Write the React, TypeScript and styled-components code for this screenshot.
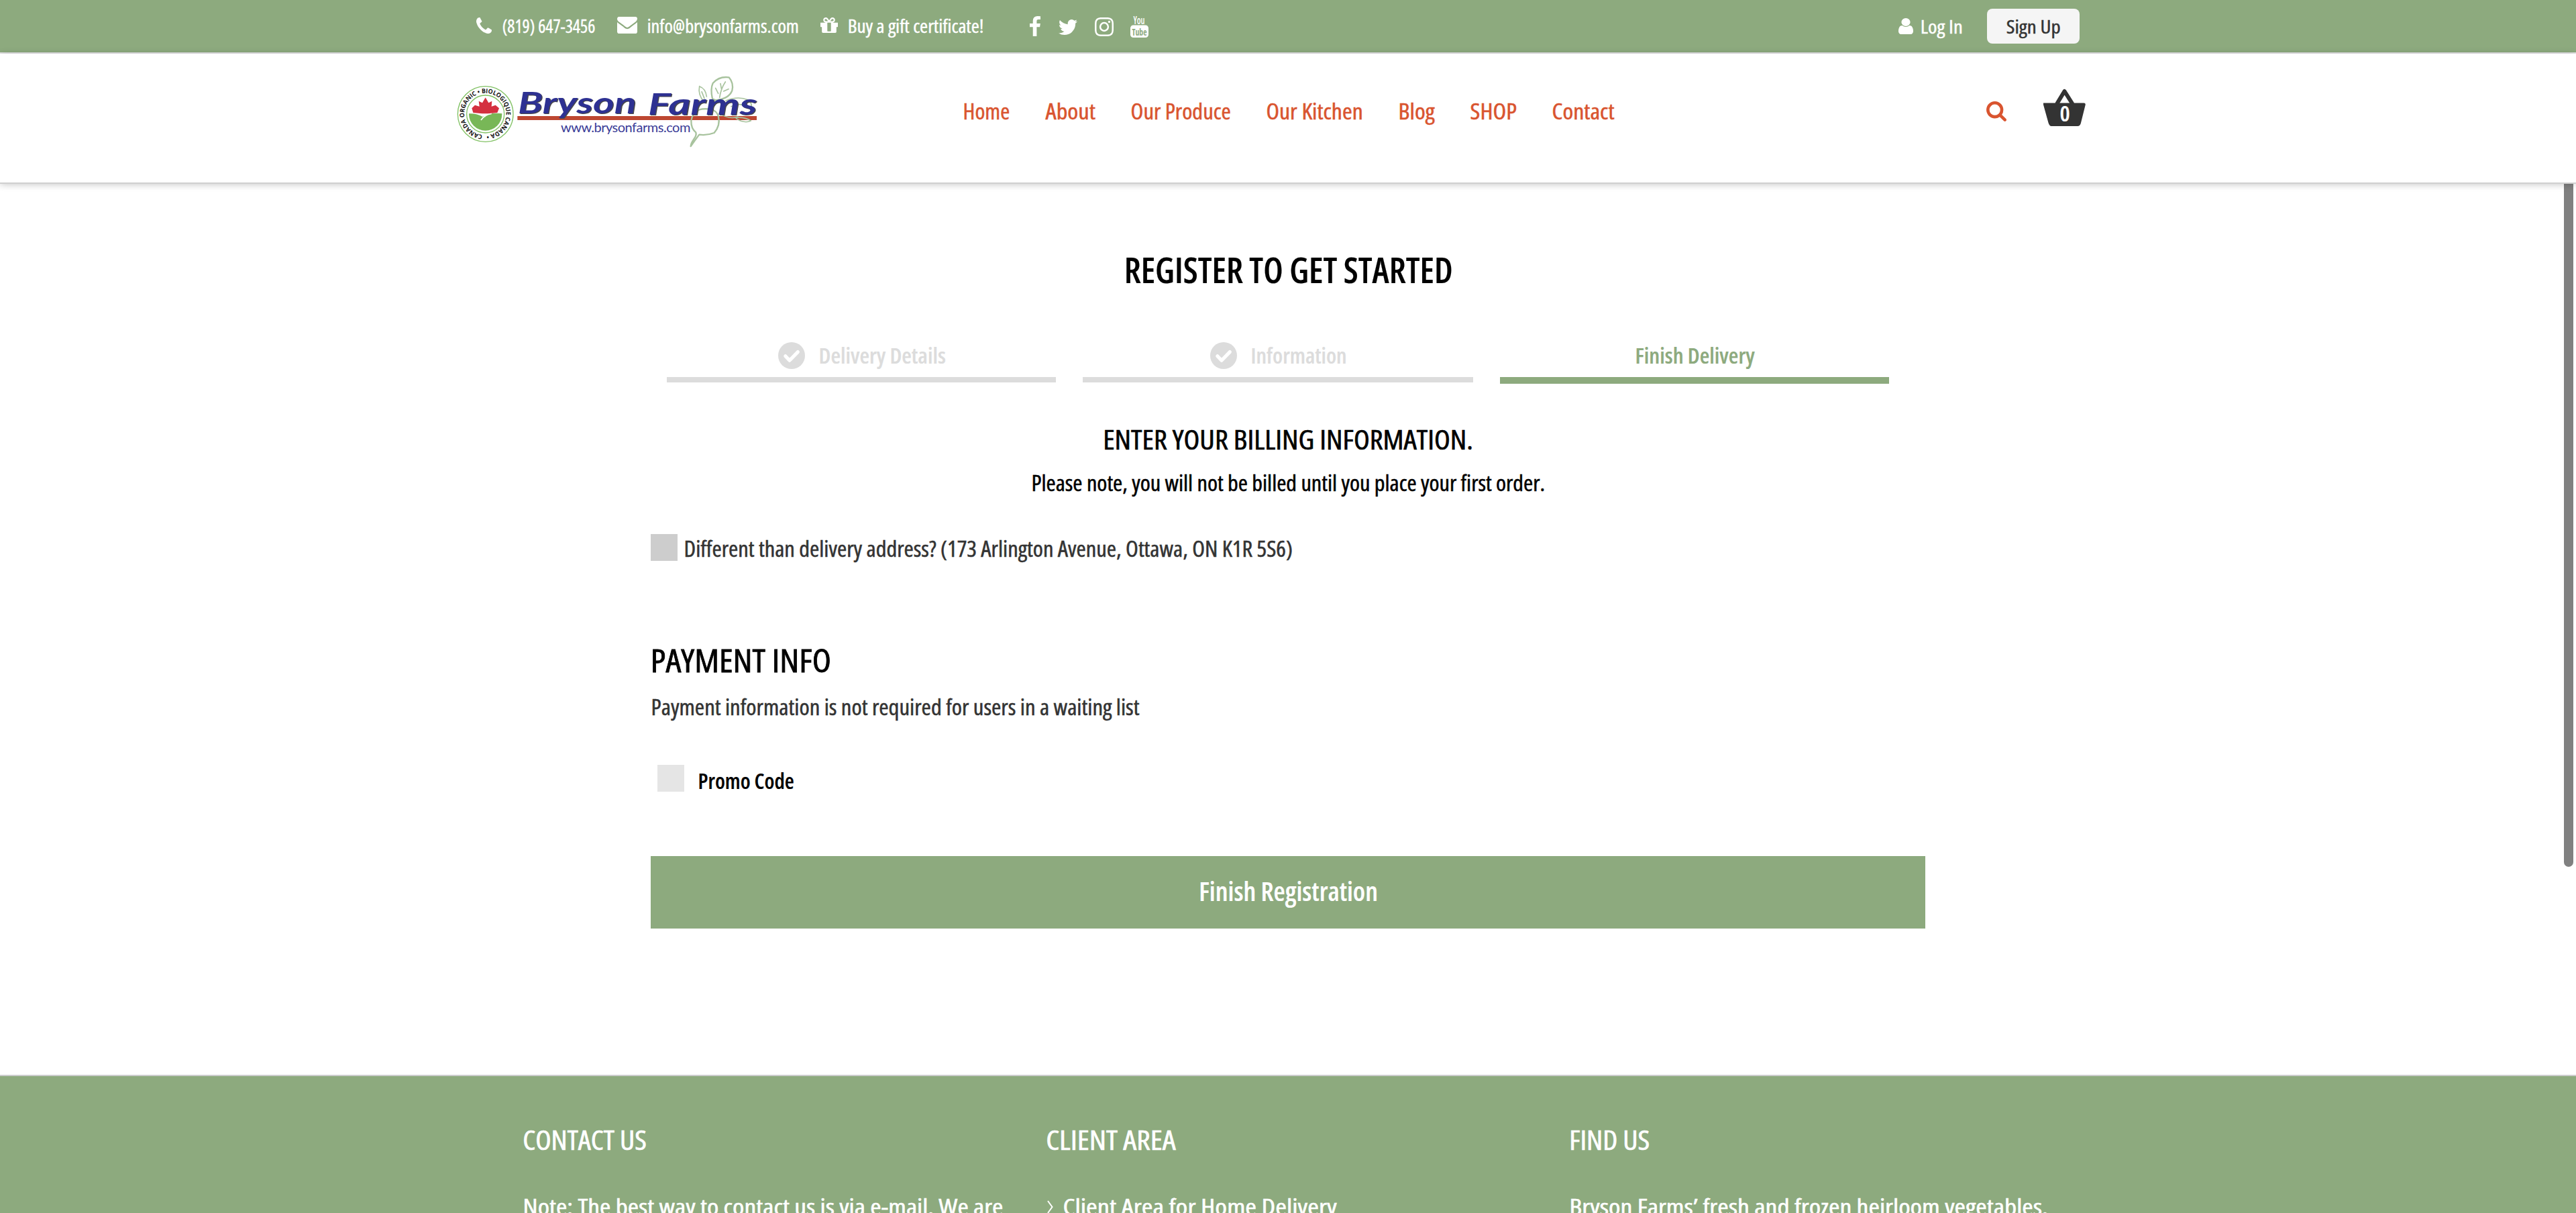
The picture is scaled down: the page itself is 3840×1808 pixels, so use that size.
import React, { useLayoutEffect, useRef, useState } from "react";
import styled, { createGlobalStyle, css } from "styled-components";

const GREEN = "#8daa7e";
const ORANGE = "#d9542f";

const Global = createGlobalStyle`
  * { box-sizing: border-box; }
  body { margin: 0; background: #fff; overflow: hidden; font-family: "Open Sans", "Noto Sans", sans-serif; font-stretch: 75%; }
  svg { display: block; flex: none; }
`;

/* A line of condensed text, squeezed or stretched to an exact width. */
const LineBox = styled.span<{ $w: number; $size: number; $line: number; $weight: number; $color: string }>`
  display: block;
  flex: none;
  width: ${(p) => p.$w}px;
  height: ${(p) => p.$line}px;
  line-height: ${(p) => p.$line}px;
  font-size: ${(p) => p.$size}px;
  font-weight: ${(p) => p.$weight};
  color: ${(p) => p.$color};
  -webkit-text-stroke: ${(p) => (p.$weight > 500 ? 0.2 : p.$size * 0.016)}px ${(p) => p.$color};
`;
const LineInk = styled.span`
  display: inline-block;
  white-space: nowrap;
  transform-origin: 0 50%;
`;

type LineProps = { w: number; size?: number; line?: number; weight?: number; color?: string; children: string };

function Line({ w, size = 32, line = 40, weight = 500, color = "#000", children }: LineProps) {
  const ref = useRef<HTMLSpanElement>(null);
  const [scale, setScale] = useState(1);
  const bearing = size * 0.045;
  useLayoutEffect(() => {
    if (ref.current) setScale((w + bearing * 2) / ref.current.offsetWidth);
  }, [w, bearing, children]);
  return (
    <LineBox $w={w} $size={size} $line={line} $weight={weight} $color={color}>
      <LineInk ref={ref} style={{ transform: `translateX(${-bearing}px) scaleX(${scale})` }}>
        {children}
      </LineInk>
    </LineBox>
  );
}

const Page = styled.div`
  position: relative;
  width: 3840px;
  height: 1808px;
  overflow: hidden;
  display: flex;
  flex-direction: column;
  background: #fff;
`;

const TopBar = styled.div`
  height: 80px;
  flex: none;
  display: flex;
  justify-content: space-between;
  padding: 0 740px 0 710px;
  background: ${GREEN};
  border-bottom: 2px solid #e4e4e6;
`;
const TopGroup = styled.div<{ $lift?: number }>`
  display: flex;
  align-items: center;
  padding-bottom: ${(p) => p.$lift ?? 0}px;
`;
const Entry = styled.a<{ $gap: number; $after: number }>`
  display: flex;
  align-items: center;
  gap: ${(p) => p.$gap}px;
  margin-right: ${(p) => p.$after}px;
`;
const Socials = styled.div`
  display: flex;
  align-items: center;
  height: 33px;
`;
const Social = styled.a<{ $after: number; $drop?: number }>`
  margin-right: ${(p) => p.$after}px;
  margin-top: ${(p) => p.$drop ?? 0}px;
`;
const SignUp = styled.a`
  display: flex;
  align-items: center;
  justify-content: center;
  width: 138px;
  height: 52px;
  border-radius: 8px;
  background: #f5f5f5;
`;

const Header = styled.header`
  position: relative;
  z-index: 2;
  height: 194px;
  flex: none;
  display: flex;
  align-items: flex-start;
  padding-left: 670px;
  background: #fff;
  border-bottom: 2px solid #cfcfcf;
  box-shadow: 0 1px 10px rgba(0, 0, 0, 0.22);
`;
const LogoLink = styled.a`
  margin-top: 20px;
`;
const Nav = styled.nav`
  display: flex;
  margin: 66px 0 0 287px;
  gap: 56px;
`;
const SearchLink = styled.a`
  margin: 71px 0 0 556px;
`;
const BasketLink = styled.a`
  display: flex;
  position: relative;
  margin: 52px 0 0 55px;
`;
const BasketCount = styled.span`
  position: absolute;
  left: 26px;
  top: 17px;
`;

const Main = styled.main`
  width: 1900px;
  height: 1328px;
  flex: none;
  margin: 0 auto;
  padding-top: 98px;
  display: flex;
  flex-direction: column;
`;
const Centered = styled.div<{ $top: number }>`
  display: flex;
  justify-content: center;
  margin-top: ${(p) => p.$top}px;
`;
const Steps = styled.ol`
  list-style: none;
  margin: 78px 54px 0 24px;
  padding: 0;
  height: 62px;
  display: grid;
  grid-template-columns: 580px 582px 580px;
  gap: 40px;
  align-items: start;
`;
const Step = styled.li<{ $active?: boolean }>`
  display: flex;
  justify-content: center;
  gap: 22px;
  padding-bottom: 12px;
  border-bottom: 8px solid #dcdcdc;
  ${(p) =>
    p.$active &&
    css`
      border-bottom: 10px solid ${GREEN};
    `}
`;
const Option = styled.label<{ $top: number; $inset?: number; $gap: number; $drop: number }>`
  display: flex;
  align-items: flex-start;
  height: 40px;
  margin-top: ${(p) => p.$top}px;
  padding-left: ${(p) => p.$inset ?? 0}px;
  gap: ${(p) => p.$gap}px;
  & > span:last-child { margin-top: ${(p) => p.$drop}px; }
`;
const Box = styled.span<{ $tone: string }>`
  width: 40px;
  height: 40px;
  flex: none;
  background: ${(p) => p.$tone};
`;
const Block = styled.div<{ $top: number }>`
  margin-top: ${(p) => p.$top}px;
  padding-left: 2px;
`;
const Submit = styled.button`
  display: flex;
  align-items: center;
  justify-content: center;
  width: 1900px;
  height: 108px;
  margin: 96px 0 0;
  padding: 0 0 4px;
  border: 0;
  font-family: inherit;
  font-stretch: inherit;
  background: ${GREEN};
`;

const Footer = styled.footer`
  height: 206px;
  flex: none;
  display: grid;
  grid-template-columns: 780px 780px 780px;
  justify-content: start;
  padding: 70px 0 0 781px;
  border-top: 2px solid #cccccc;
  background: ${GREEN};
`;
const FooterColumn = styled.section`
  min-width: 0;
`;
const FooterRow = styled.div`
  display: flex;
  align-items: center;
  gap: 16px;
  margin-top: 55px;
`;

const ScrollThumb = styled.div`
  position: absolute;
  right: 4px;
  top: 260px;
  width: 14px;
  height: 1032px;
  border-radius: 7px;
  background: #808080;
`;

const paths = {
  phone:
    "M1408 1240q0 27-10 70.5t-20.5 68.5q-21 50-122 106-94 51-186 51-27 0-53-3.5t-57.5-12.5-47-14.5-55.5-20.5-49-18q-98-35-175-83-127-79-264-216t-216-264q-48-77-83-175-3-9-18-49t-20.5-55.5-14.5-47-12.5-57.5-3.5-53q0-92 51-186 56-101 106-122 25-10 68.5-20.5t70.5-10.5q14 0 21 3 18 6 53 76 11 19 30 54t35 63.5 31 53.5q3 4 17.5 25t21.5 35.5 7 28.5q0 20-28.5 50t-62 55-62 53-28.5 46q0 9 5 22.5t8.5 20.5 14 24 11.5 19q76 137 174 235t235 174q2 1 19 11.5t24 14 20.5 8.5 22.5 5q18 0 46-28.5t53-62 55-62 50-28.5q14 0 28.5 7t35.5 21.5 25 17.5q25 15 53.5 31t63.5 35 54 30q70 35 76 53 3 7 3 21z",
  envelope:
    "M1792 710v794q0 66-47 113t-113 47h-1472q-66 0-113-47t-47-113v-794q44 49 101 87 362 246 497 345 57 42 92.5 65.5t94.5 48 110 24.5h2q51 0 110-24.5t94.5-48 92.5-65.5q170-123 498-345 57-39 100-87zm0-294q0 79-49 151t-122 123q-376 261-468 325-10 7-42.5 31t-54 38.5-52 32.5-57.5 27-50 9h-2q-23 0-50-9t-57.5-27-52-32.5-54-38.5-42.5-31q-91-64-262-182.5t-205-142.5q-62-42-117-115.5t-55-136.5q0-78 41.5-130t118.5-52h1472q65 0 112.5 47t47.5 113z",
  gift:
    "M1056 1356v-716h-320v716q0 25 18 38.5t46 13.5h192q28 0 46-13.5t18-38.5zm-456-844h195l-126-161q-26-31-69-31-40 0-68 28t-28 68 28 68 68 28zm688-96q0-40-28-68t-68-28q-43 0-69 31l-125 161h194q40 0 68-28t28-68zm376 256v320q0 14-9 23t-23 9h-96v416q0 40-28 68t-68 28h-1088q-40 0-68-28t-28-68v-416h-96q-14 0-23-9t-9-23v-320q0-14 9-23t23-9h440q-93 0-158.5-65.5t-65.5-158.5 65.5-158.5 158.5-65.5q107 0 168 77l128 165 128-165q61-77 168-77 93 0 158.5 65.5t65.5 158.5-65.5 158.5-158.5 65.5h440q14 0 23 9t9 23z",
  facebook:
    "M1343 12v264h-157q-86 0-116 36t-30 108v189h293l-39 296h-254v759h-306v-759h-255v-296h255v-218q0-186 104-288.5t277-102.5q147 0 228 12z",
  twitter:
    "M1684 408q-67 98-162 167 1 14 1 42 0 130-38 259.5t-115.5 248.5-184.5 210.5-258 146-323 54.5q-271 0-496-145 35 4 78 4 225 0 401-138-105-2-188-64.5t-114-159.5q33 5 61 5 43 0 85-11-112-23-185.5-111.5t-73.5-205.5v-4q68 38 146 41-66-44-105-115t-39-154q0-88 44-163 121 149 294.5 238.5t371.5 99.5q-8-38-8-74 0-134 94.5-228.5t228.5-94.5q140 0 236 102 109-21 205-78-37 115-142 178 93-10 186-50z",
  instagram:
    "M1152 896q0-106-75-181t-181-75-181 75-75 181 75 181 181 75 181-75 75-181zm138 0q0 164-115 279t-279 115-279-115-115-279 115-279 279-115 279 115 115 279zm108-410q0 38-27 65t-65 27-65-27-27-65 27-65 65-27 65 27 27 65zm-502-220q-7 0-76.5-.5t-105.5 0-96.5 3-103 10-71.5 18.5q-50 20-88 58t-58 88q-11 29-18.5 71.5t-10 103-3 96.5 0 105.5.5 76.5-.5 76.5 0 105.5 3 96.5 10 103 18.5 71.5q20 50 58 88t88 58q29 11 71.5 18.5t103 10 96.5 3 105.5 0 76.5-.5 76.5.5 105.5 0 96.5-3 103-10 71.5-18.5q50-20 88-58t58-88q11-29 18.5-71.5t10-103 3-96.5 0-105.5-.5-76.5.5-76.5 0-105.5-3-96.5-10-103-18.5-71.5q-20-50-58-88t-88-58q-29-11-71.5-18.5t-103-10-96.5-3-105.5 0-76.5.5zm768 630q0 229-5 317-10 208-124 322t-322 124q-88 5-317 5t-317-5q-208-10-322-124t-124-322q-5-88-5-317t5-317q10-208 124-322t322-124q88-5 317-5t317 5q208 10 322 124t124 322q5 88 5 317z",
  search:
    "M1216 832q0-185-131.5-316.5t-316.5-131.5-316.5 131.5-131.5 316.5 131.5 316.5 316.5 131.5 316.5-131.5 131.5-316.5zm512 832q0 52-38 90t-90 38q-54 0-90-38l-343-342q-179 124-399 124-143 0-273.5-55.5t-225-150-150-225-55.5-273.5 55.5-273.5 150-225 225-150 273.5-55.5 273.5 55.5 225 150 150 225 55.5 273.5q0 220-124 399l343 343q37 37 37 90z",
  user:
    "M1536 1399q0 109-62.5 187t-150.5 78h-854q-88 0-150.5-78t-62.5-187q0-85 8.5-160.5t31.5-152 58.5-131 94-89 134.5-34.5q131 128 313 128t313-128q76 0 134.5 34.5t94 89 58.5 131 31.5 152 8.5 160.5zm-256-887q0 159-112.5 271.5t-271.5 112.5-271.5-112.5-112.5-271.5 112.5-271.5 271.5-112.5 271.5 112.5 112.5 271.5z",
};

function Icon({ name, box, w, h, fill = "#fff" }: { name: keyof typeof paths; box: string; w: number; h: number; fill?: string }) {
  return (
    <svg width={w} height={h} viewBox={box} preserveAspectRatio="none">
      <path d={paths[name]} fill={fill} />
    </svg>
  );
}

const YouTube = () => (
  <svg width="28" height="34" viewBox="0 0 28 34" overflow="visible">
    <text x="4.5" y="12.8" fontSize="16" fontWeight="600" textLength="17" lengthAdjust="spacingAndGlyphs" fill="#fff">You</text>
    <rect x="0" y="14.5" width="27" height="18.5" rx="4.500" fill="#fff" />
    <text x="2.5" y="29.500" fontSize="15" fontWeight="700" textLength="22" lengthAdjust="spacingAndGlyphs" fill={GREEN}>Tube</text>
  </svg>
);

const Done = () => (
  <svg width="40" height="40" viewBox="0 0 40 40">
    <circle cx="20" cy="20" r="20" fill="#dcdcdc" />
    <path d="M10.8 20.8 17 27.2 29.3 14.6" fill="none" stroke="#fff" strokeWidth="5.2" strokeLinecap="round" strokeLinejoin="round" />
  </svg>
);

const Basket = () => (
  <svg width="64" height="56" viewBox="0 0 64 56">
    <path d="M20 23 31.5 4 43.5 23" fill="none" stroke="#333" strokeWidth="6" strokeLinejoin="round" />
    <path d="M0 21.5H60.5Q63.5 21.5 62.5 25L56 51Q55 56 51 56H12Q9 56 7.500 51L0 24Z" fill="#333" />
  </svg>
);

const Logo = () => (
  <svg width="480" height="130" viewBox="0 0 1440 390" fontStretch="100%">
    <defs>
      <path id="sealRing" d="M160 304A94 94 0 0 1 160 116A94 94 0 0 1 160 304" />
      <clipPath id="sealInner"><circle cx="161" cy="210" r="74" /></clipPath>
    </defs>
    <circle cx="161" cy="210" r="124" fill="#fff" stroke="#80c163" strokeWidth="4" />
    <circle cx="161" cy="210" r="84" fill="#fff" stroke="#80c163" strokeWidth="4" />
    <g clipPath="url(#sealInner)">
      <path d="M161 136 175 160 190 152 188 176 206 170 222 184 214 204 176 208H146L106 204 100 184 114 170 134 176 131 152 147 160Z" fill="#d4303f" />
      <path d="M86 208Q122 206 148 222Q180 201 240 208V290H86Z" fill="#78b757" />
      <path d="M134 210Q152 214 162 221M188 208Q158 212 141 237" fill="none" stroke="#fff" strokeWidth="5" />
    </g>
    <text fontFamily="Open Sans, sans-serif" fontSize="28" fontWeight="700" fill="#111">
      <textPath href="#sealRing" startOffset="12" textLength="572" lengthAdjust="spacingAndGlyphs">CANADA ORGANIC • BIOLOGIQUE CANADA •</textPath>
    </text>
    <rect x="304" y="219" width="1070" height="18" fill="#bd4731" />
    <g fill="none" stroke="#a8c39e" strokeWidth="7" strokeLinecap="round" strokeLinejoin="round">
      <path d="M1118 190Q1084 206 1081 240Q1080 275 1102 292Q1106 305 1093 322Q1080 340 1079 354Q1096 330 1117 302Q1150 307 1184 294Q1212 262 1203 222Q1196 196 1172 189Q1140 184 1118 190Z" />
      <path d="M1176 142Q1166 98 1178 72Q1206 40 1250 46Q1272 72 1264 105Q1250 142 1190 148Z" />
      <path d="M1208 136Q1214 96 1234 66M1190 94 1202 118M1212 74 1216 96M1226 108 1248 98" strokeWidth="5" />
      <path d="M1118 86Q1110 124 1140 158M1118 86Q1146 96 1150 132M1128 110 1140 140" strokeWidth="5" />
      <path d="M1236 150Q1290 128 1334 146Q1360 164 1346 190M1260 176Q1300 158 1326 176M1206 206Q1250 236 1290 222M1282 226Q1320 222 1348 240Q1320 254 1282 230" strokeWidth="5" />
    </g>
    <g fontFamily="Lato, sans-serif" fontSize="134" fontStyle="italic" fontWeight="700">
      <text x="310" y="210" textLength="530" lengthAdjust="spacingAndGlyphs" fill="#4a4a4a">Bryson</text>
      <text x="892" y="217" textLength="488" lengthAdjust="spacingAndGlyphs" fill="#4a4a4a">Farms</text>
      <text x="306" y="206" textLength="530" lengthAdjust="spacingAndGlyphs" fill="#2e3192">Bryson</text>
      <text x="888" y="213" textLength="488" lengthAdjust="spacingAndGlyphs" fill="#2e3192">Farms</text>
    </g>
    <text x="498" y="290" fontFamily="Lato, sans-serif" fontSize="60" textLength="580" lengthAdjust="spacing" fill="#3a3c97">www.brysonfarms.com</text>
  </svg>
);

const navItems: [string, number][] = [
  ["Home", 67],
  ["About", 71],
  ["Our Produce", 146],
  ["Our Kitchen", 141],
  ["Blog", 51],
  ["SHOP", 66],
  ["Contact", 90],
];

export default function App() {
  return (
    <Page>
      <Global />
      <TopBar>
        <TopGroup $lift={3}>
          <Entry $gap={17} $after={34}>
            <Icon name="phone" box="0 128 1408 1408" w={23} h={24} />
            <Line w={136} size={28} color="#fff">(819) 647-3456</Line>
          </Entry>
          <Entry $gap={16} $after={33}>
            <Icon name="envelope" box="0 256 1792 1408" w={30} h={25} />
            <Line w={224} size={28} color="#fff">info@brysonfarms.com</Line>
          </Entry>
          <Entry $gap={16} $after={70}>
            <Icon name="gift" box="128 192 1536 1344" w={26} h={23} />
            <Line w={200} size={28} color="#fff">Buy a gift certificate!</Line>
          </Entry>
          <Socials>
            <Social $after={27} $drop={2}><Icon name="facebook" box="479 0 864 1664" w={16} h={30} /></Social>
            <Social $after={26} $drop={5}><Icon name="twitter" box="108 256 1576 1280" w={28} h={23} /></Social>
            <Social $after={25} $drop={5}><Icon name="instagram" box="128 128 1536 1536" w={28} h={28} /></Social>
            <Social $after={0} $drop={5}><YouTube /></Social>
          </Socials>
        </TopGroup>
        <TopGroup>
          <Entry $gap={12} $after={37}>
            <Icon name="user" box="256 128 1280 1536" w={22} h={24} />
            <Line w={61} size={28} color="#fff">Log In</Line>
          </Entry>
          <SignUp><Line w={78} size={28} color="#333">Sign Up</Line></SignUp>
        </TopGroup>
      </TopBar>

      <Header>
        <LogoLink><Logo /></LogoLink>
        <Nav>
          {navItems.map(([label, w]) => (
            <Line key={label} w={w} color={ORANGE}>{label}</Line>
          ))}
        </Nav>
        <SearchLink><Icon name="search" box="64 128 1664 1664" w={30} h={30} fill={ORANGE} /></SearchLink>
        <BasketLink>
          <Basket />
          <BasketCount><Line w={12} weight={600} color="#fff">0</Line></BasketCount>
        </BasketLink>
      </Header>

      <Main>
        <Centered $top={0}><Line w={485} size={51.5} line={60} weight={600}>REGISTER TO GET STARTED</Line></Centered>
        <Steps>
          <Step><Done /><Line w={186} weight={600} color="#dcdcdc">Delivery Details</Line></Step>
          <Step><Done /><Line w={140} weight={600} color="#dcdcdc">Information</Line></Step>
          <Step $active><Line w={175} weight={600} color={GREEN}>Finish Delivery</Line></Step>
        </Steps>
        <Centered $top={58}><Line w={548} size={40} line={50}>ENTER YOUR BILLING INFORMATION.</Line></Centered>
        <Centered $top={20}><Line w={763}>Please note, you will not be billed until you place your first order.</Line></Centered>
        <Option $top={56} $gap={11} $drop={2}>
          <Box $tone="#cdcdcd" />
          <Line w={905} color="#333">Different than delivery address? (173 Arlington Avenue, Ottawa, ON K1R 5S6)</Line>
        </Option>
        <Block $top={118}><Line w={265} size={48} line={60}>PAYMENT INFO</Line></Block>
        <Block $top={20}><Line w={725} color="#333">Payment information is not required for users in a waiting list</Line></Block>
        <Option $top={66} $inset={10} $gap={22} $drop={4}>
          <Box $tone="#e5e5e5" />
          <Line w={140} weight={600}>Promo Code</Line>
        </Option>
        <Submit><Line w={263} size={40} line={50} weight={600} color="#fff">Finish Registration</Line></Submit>
      </Main>

      <Footer>
        <FooterColumn>
          <Line w={181} size={40} line={50} color="#fff">CONTACT US</Line>
          <FooterRow><Line w={713} color="#fff">Note: The best way to contact us is via e-mail. We are</Line></FooterRow>
        </FooterColumn>
        <FooterColumn>
          <Line w={190} size={40} line={50} color="#fff">CLIENT AREA</Line>
          <FooterRow>
            <svg width="9" height="20" viewBox="0 0 9 20"><path d="M1 1 7.500 10 1 19" fill="none" stroke="#fff" strokeWidth="2" /></svg>
            <Line w={405} color="#fff">Client Area for Home Delivery</Line>
          </FooterRow>
        </FooterColumn>
        <FooterColumn>
          <Line w={117} size={40} line={50} color="#fff">FIND US</Line>
          <FooterRow><Line w={710} color="#fff">Bryson Farms’ fresh and frozen heirloom vegetables.</Line></FooterRow>
        </FooterColumn>
      </Footer>
      <ScrollThumb />
    </Page>
  );
}
